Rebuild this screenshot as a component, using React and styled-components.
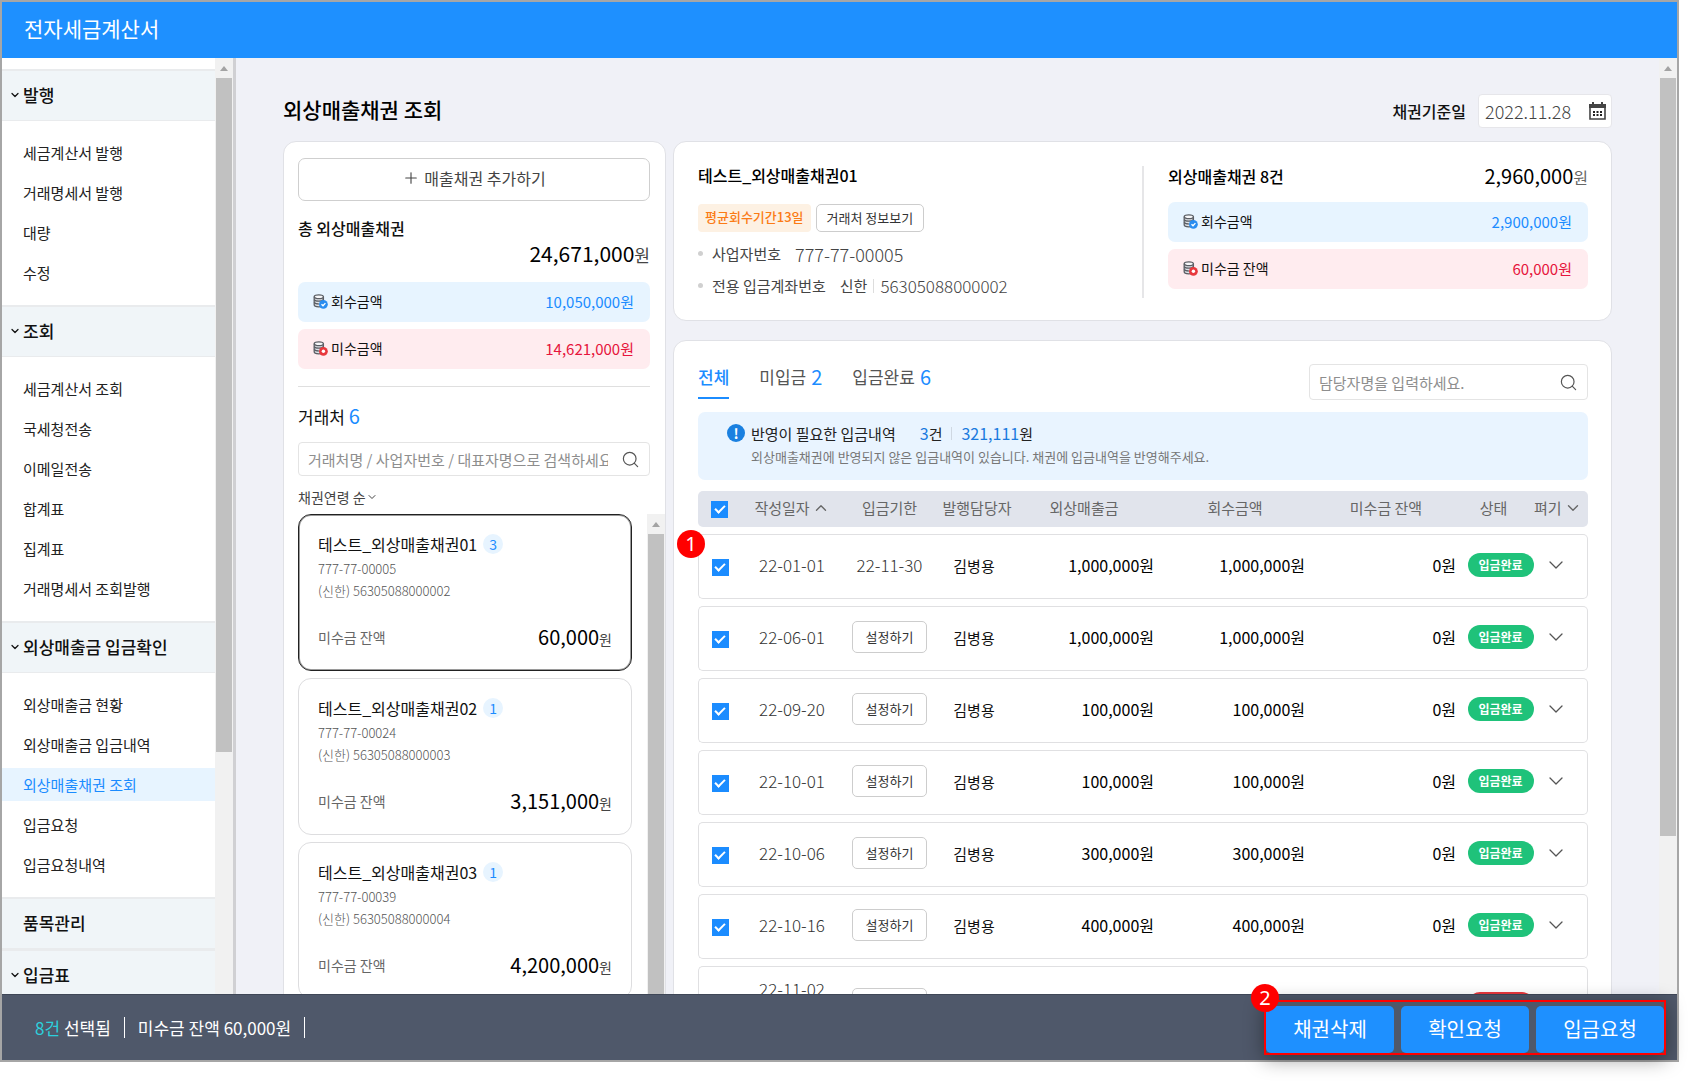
import React from "react";
import styled, { createGlobalStyle, css } from "styled-components";
import { ChevronDown, ChevronUp, Plus, Search } from "lucide-react";

const blue = "#1b8cff";
const red = "#e6153c";

const GlobalStyle = createGlobalStyle`
  *, *::before, *::after { box-sizing: border-box; }
  body {
    margin: 0;
    background: #fff;
    color: #111;
    font-family: "Noto Sans CJK KR", "Noto Sans", sans-serif;
    font-size: 15px;
  }
  button, input, select { font: inherit; color: inherit; margin: 0; }
  button { cursor: pointer; }
  h1, h2, h3, p, ul, dl, dd { margin: 0; padding: 0; font-size: inherit; }
  ul { list-style: none; }
  svg { display: block; flex: none; }
`;

/* ---------- Shell ---------- */

const Page = styled.div`
  height: 100vh;
  padding: 0 18px 23px 0;
`;

const Frame = styled.div`
  display: flex;
  flex-direction: column;
  height: 100%;
  border: 2px solid #a6a6a6;
`;

const TopBar = styled.header`
  display: flex;
  align-items: center;
  flex: none;
  height: 56px;
  padding: 0 22px 4px;
  background: #1e90ff;
  color: #fff;
  font-size: 21px;
`;

const Body = styled.div`
  display: flex;
  flex: 1;
  min-height: 0;
  overflow: hidden;
`;

/* ---------- Scroll bar ---------- */

const ScrollTrack = styled.div`
  display: flex;
  flex-direction: column;
  align-items: center;
  flex: none;
  width: 18px;
  background: #f1f1f1;
`;

const ScrollArrow = styled.div`
  display: grid;
  place-items: center;
  flex: none;
  height: 20px;

  &::before {
    content: "";
    border: 4px solid transparent;
    border-top: 0;
    border-bottom: 5px solid #a3a3a3;
  }
`;

const ScrollThumb = styled.div`
  width: 16px;
  height: ${(p) => p.$size};
  background: #c1c1c1;
`;

function ScrollBar({ size }) {
  return (
    <ScrollTrack aria-hidden="true">
      <ScrollArrow />
      <ScrollThumb $size={size} />
    </ScrollTrack>
  );
}

/* ---------- Side menu ---------- */

const Side = styled.aside`
  display: flex;
  flex: none;
  width: 234px;
  border-right: 3px solid #d0d0d3;
  background: #fff;
`;

const SideNav = styled.nav`
  flex: 1;
  padding-top: 11px;
`;

const GroupButton = styled.button`
  display: flex;
  align-items: center;
  width: 100%;
  height: 52px;
  padding: 0 7px 2px;
  border: solid #e9ebed;
  border-width: 2px 0 1px;
  background: #f0f5f8;
  font-size: 17px;
  font-weight: 500;
  color: #111;
`;

const ChevronSlot = styled.span`
  flex: none;
  width: 14px;
`;

const MenuList = styled.ul`
  display: grid;
  gap: 7px;
  padding: 15px 0 16px;
`;

const MenuLink = styled.a`
  display: flex;
  align-items: center;
  height: 33px;
  padding: 0 0 1px 21px;
  background: ${(p) => (p.$active ? "#e7f4ff" : "transparent")};
  color: ${(p) => (p.$active ? blue : "#222")};
  text-decoration: none;
`;

const MENU = [
  { title: "발행", items: ["세금계산서 발행", "거래명세서 발행", "대량", "수정"] },
  {
    title: "조회",
    items: ["세금계산서 조회", "국세청전송", "이메일전송", "합계표", "집계표", "거래명세서 조회발행"],
  },
  {
    title: "외상매출금 입금확인",
    items: ["외상매출금 현황", "외상매출금 입금내역", "외상매출채권 조회", "입금요청", "입금요청내역"],
  },
  { title: "품목관리" },
  { title: "입금표", items: [] },
];

const ACTIVE_ITEM = "외상매출채권 조회";

function SideMenu() {
  return (
    <Side>
      <SideNav>
        {MENU.map(({ title, items }) => (
          <React.Fragment key={title}>
            <GroupButton type="button">
              <ChevronSlot>{items && <ChevronDown size={12} strokeWidth={2.5} />}</ChevronSlot>
              {title}
            </GroupButton>
            {items && items.length > 0 && (
              <MenuList>
                {items.map((item) => (
                  <li key={item}>
                    <MenuLink href="#" $active={item === ACTIVE_ITEM}>
                      {item}
                    </MenuLink>
                  </li>
                ))}
              </MenuList>
            )}
          </React.Fragment>
        ))}
      </SideNav>
      <ScrollBar size="72%" />
    </Side>
  );
}

/* ---------- Shared parts ---------- */

const Panel = styled.section`
  border: 1px solid #e0e1e6;
  border-radius: 13px;
  background: #fff;
`;

const SearchBox = styled.label`
  display: flex;
  align-items: center;
  gap: 13px;
  width: ${(p) => p.$width || "auto"};
  height: ${(p) => p.$height || "34px"};
  padding: 0 9px;
  border: 1px solid #e4e4e4;
  border-radius: 4px;
  color: #555;
`;

const TextInput = styled.input`
  flex: 1;
  width: 0;
  min-width: 0;
  padding: 0;
  border: 0;
  outline: 0;
  background: transparent;

  &::placeholder {
    color: #8e8e8e;
    opacity: 1;
  }
`;

const Checkbox = styled.input.attrs({ type: "checkbox" })`
  display: inline-grid;
  place-items: center;
  width: 17px;
  height: 17px;
  border: 1px solid #bbb;
  appearance: none;
  vertical-align: middle;

  &:checked {
    border-color: ${blue};
    background: ${blue};
  }

  &:checked::before {
    content: "";
    width: 10px;
    height: 6px;
    margin-bottom: 3px;
    border: solid #fff;
    border-width: 0 0 2px 2px;
    transform: rotate(-45deg);
  }
`;

const AmountBox = styled.div`
  display: flex;
  align-items: center;
  height: 40px;
  padding: 0 16px 2px 15px;
  border-radius: 7px;
  background: ${(p) => (p.$tone === "blue" ? "#e7f4ff" : "#ffecef")};

  & + & {
    margin-top: 7px;
  }
`;

const AmountLabel = styled.span`
  flex: 1;
  padding-left: 3px;
  font-size: 14px;
`;

const AmountValue = styled.span`
  color: ${(p) => (p.$tone === "blue" ? blue : red)};
`;

function CoinIcon({ tone }) {
  const badge = tone === "blue" ? "#2a8df0" : "#e8383d";
  return (
    <svg width="15" height="15" viewBox="0 0 15 15" fill="none" aria-hidden="true">
      <path
        d="M1.2 2.8v8c0 1.1 2 2 4.6 2s4.6-.9 4.6-2v-8"
        fill="#dfe3e8"
        stroke="#5a5d63"
        strokeWidth="1.3"
      />
      <ellipse cx="5.8" cy="2.8" rx="4.6" ry="1.9" fill="#f6f7f9" stroke="#5a5d63" strokeWidth="1.3" />
      <path d="M1.2 5.6c.6 1 2.3 1.6 4.6 1.6s4-.6 4.6-1.6M1.2 8.4c.6 1 2.3 1.6 4.6 1.6" stroke="#5a5d63" strokeWidth="1.3" />
      <circle cx="10.4" cy="10.3" r="4.4" fill={badge} />
      {tone === "blue" ? (
        <path d="m8.5 10.3 1.5 1.5 2.4-2.7" stroke="#fff" strokeWidth="1.3" />
      ) : (
        <circle cx="10.4" cy="10.3" r="1.7" fill="#fff" />
      )}
    </svg>
  );
}

function AmountRow({ tone, label, value }) {
  return (
    <AmountBox $tone={tone}>
      <CoinIcon tone={tone} />
      <AmountLabel>{label}</AmountLabel>
      <AmountValue $tone={tone}>{value}원</AmountValue>
    </AmountBox>
  );
}

const BigAmount = styled.span`
  font-size: ${(p) => p.$size || 20}px;
  line-height: 22px;
  color: #000;
`;

const Unit = styled.span`
  font-size: ${(p) => p.$size || 14}px;
  color: ${(p) => p.$color || "#444"};
`;

const Count = styled.span`
  font-size: 20px;
  color: ${blue};
`;

/* ---------- Main ---------- */

const Main = styled.main`
  flex: 1;
  min-width: 0;
  padding: 36px 47px 0;
  background: #f0f1f7;
`;

const TitleRow = styled.div`
  display: flex;
  align-items: center;
  justify-content: space-between;
  height: 34px;
  margin-bottom: 13px;
`;

const PageTitle = styled.h1`
  padding-bottom: 4px;
  font-size: 21px;
  font-weight: 500;
  color: #000;
`;

const DateField = styled.label`
  display: flex;
  align-items: center;
  gap: 12px;
  font-size: 16px;
  font-weight: 500;
`;

const DateBox = styled.span`
  display: flex;
  align-items: center;
  width: 134px;
  height: 34px;
  padding: 0 5px 0 6px;
  border: 1px solid #e6e6ea;
  border-radius: 4px;
  background: #fff;
  font-size: 18px;
  font-weight: 300;
  color: #444;
`;

const Columns = styled.div`
  display: flex;
  gap: 7px;
`;

/* ---------- Customer panel ---------- */

const CustomerPanel = styled(Panel)`
  flex: none;
  width: 383px;
  padding: 16px 15px 20px 14px;
`;

const AddButton = styled.button`
  display: flex;
  align-items: center;
  justify-content: center;
  gap: 4px;
  width: 100%;
  height: 43px;
  padding: 0 0 3px;
  border: 1px solid #cfcfcf;
  border-radius: 7px;
  background: #fff;
  color: #444;
  font-size: 16px;
`;

const TotalTitle = styled.h2`
  margin-top: 15px;
  font-size: 16px;
  font-weight: 500;
  line-height: 24px;
`;

const TotalAmount = styled.p`
  display: flex;
  align-items: baseline;
  justify-content: flex-end;
  height: 28px;
  margin: 2px 0 12px;
  line-height: 22px;
`;

const Divider = styled.hr`
  height: 1px;
  margin: 17px 0 16px;
  border: 0;
  background: #dfdfdf;
`;

const CustomerTitle = styled.h2`
  height: 26px;
  margin-bottom: 13px;
  font-size: 17px;
  font-weight: 400;
  line-height: 26px;
`;

const SortBox = styled.label`
  display: flex;
  align-items: center;
  width: fit-content;
  height: 20px;
  margin: 11px 0 7px;
  font-size: 14px;
  color: #444;
`;

const SortSelect = styled.select`
  padding: 0;
  border: 0;
  outline: 0;
  appearance: none;
  background: transparent;
`;

const ListArea = styled.div`
  display: flex;
  gap: 15px;
  margin-right: -15px;
`;

const CardList = styled.ul`
  display: grid;
  flex: 1;
  gap: 7px;
`;

const CustomerCard = styled.li`
  padding: 17px 19px 19px;
  border: 1px solid ${(p) => (p.$selected ? "#222" : "#dddddf")};
  border-radius: 13px;
  box-shadow: ${(p) => (p.$selected ? "inset 0 0 0 1px #9a9a9a" : "none")};
`;

const CardTitle = styled.h3`
  display: flex;
  align-items: center;
  gap: 6px;
  margin-bottom: 2px;
  font-size: 16px;
  font-weight: 400;
  line-height: 24px;
`;

const CardCount = styled.span`
  display: grid;
  place-items: center;
  width: 20px;
  height: 20px;
  border-radius: 50%;
  background: #e7f4ff;
  color: ${blue};
  font-size: 14px;
  line-height: 20px;
`;

const CardLine = styled.p`
  font-size: 13px;
  font-weight: 300;
  line-height: 22px;
  color: #555;
`;

const CardBalance = styled.p`
  display: flex;
  align-items: center;
  justify-content: space-between;
  height: 28px;
  margin-top: 21px;
  font-size: 14px;
  color: #666;
`;

const CUSTOMERS = [
  { name: "테스트_외상매출채권01", count: 3, biz: "777-77-00005", account: "56305088000002", balance: "60,000" },
  { name: "테스트_외상매출채권02", count: 1, biz: "777-77-00024", account: "56305088000003", balance: "3,151,000" },
  { name: "테스트_외상매출채권03", count: 1, biz: "777-77-00039", account: "56305088000004", balance: "4,200,000" },
];

function Customers() {
  return (
    <CustomerPanel>
      <AddButton type="button">
        <Plus size={18} strokeWidth={1.5} />
        매출채권 추가하기
      </AddButton>
      <TotalTitle>총 외상매출채권</TotalTitle>
      <TotalAmount>
        <BigAmount $size={21}>24,671,000</BigAmount>
        <Unit $size={17}>원</Unit>
      </TotalAmount>
      <AmountRow tone="blue" label="회수금액" value="10,050,000" />
      <AmountRow tone="red" label="미수금액" value="14,621,000" />
      <Divider />
      <CustomerTitle>
        거래처 <Count>6</Count>
      </CustomerTitle>
      <SearchBox>
        <TextInput
          aria-label="거래처 검색"
          placeholder="거래처명 / 사업자번호 / 대표자명으로 검색하세요."
        />
        <Search size={19} strokeWidth={1.5} />
      </SearchBox>
      <SortBox>
        <SortSelect aria-label="정렬">
          <option>채권연령 순</option>
        </SortSelect>
        <ChevronDown size={12} strokeWidth={2} />
      </SortBox>
      <ListArea>
        <CardList>
          {CUSTOMERS.map((c, i) => (
            <CustomerCard key={c.name} $selected={i === 0}>
              <CardTitle>
                {c.name}
                <CardCount>{c.count}</CardCount>
              </CardTitle>
              <CardLine>{c.biz}</CardLine>
              <CardLine>(신한) {c.account}</CardLine>
              <CardBalance>
                미수금 잔액
                <span>
                  <BigAmount>{c.balance}</BigAmount>
                  <Unit>원</Unit>
                </span>
              </CardBalance>
            </CustomerCard>
          ))}
        </CardList>
        <ScrollBar size="100%" />
      </ListArea>
    </CustomerPanel>
  );
}

/* ---------- Summary panel ---------- */

const RightColumn = styled.div`
  display: flex;
  flex: 1;
  flex-direction: column;
  gap: 19px;
  min-width: 0;
`;

const SummaryPanel = styled(Panel)`
  display: flex;
  gap: 24px;
  padding: 24px 23px 22px 24px;
`;

const SummaryInfo = styled.div`
  flex: 1;
  border-right: 2px solid #e6e6e8;
`;

const SummaryTotals = styled.div`
  flex: none;
  width: 420px;
`;

const SummaryTitle = styled.h2`
  height: 20px;
  font-size: 16px;
  font-weight: 500;
  line-height: 18px;
  color: #000;
`;

const TagRow = styled.div`
  display: flex;
  gap: 5px;
  margin: 18px 0 12px;
`;

const PeriodTag = styled.span`
  display: flex;
  align-items: center;
  height: 28px;
  padding: 0 7px 3px;
  border-radius: 4px;
  background: #fdf1e3;
  color: #fb7b15;
  font-size: 13px;
  font-weight: 500;
`;

const SmallButton = styled.button`
  height: ${(p) => p.$height || 28}px;
  padding: 0 ${(p) => p.$pad || 10}px;
  border: 1px solid #cdcdcd;
  border-radius: 5px;
  background: #fff;
  color: #333;
  font-size: 13px;
  line-height: 20px;
  white-space: nowrap;
`;

const InfoList = styled.dl`
  display: grid;
  gap: 10px;
`;

const InfoItem = styled.div`
  display: flex;
  align-items: center;
  gap: 14px;
  height: 22px;
  padding-bottom: 3px;
  color: #444;
`;

const InfoLabel = styled.dt`
  display: flex;
  align-items: center;
  gap: 9px;

  &::before {
    content: "";
    width: 5px;
    height: 5px;
    border-radius: 50%;
    background: #d0d0d0;
  }
`;

const InfoValue = styled.dd`
  display: flex;
  align-items: center;
  gap: 6px;
`;

const InfoNumber = styled.span`
  font-size: ${(p) => p.$size || 17}px;
  font-weight: 300;
`;

const Bar = styled.span`
  width: 1px;
  height: ${(p) => p.$height}px;
  background: ${(p) => p.$color};
`;

const TotalsHead = styled.div`
  display: flex;
  align-items: center;
  justify-content: space-between;
  height: 22px;
  margin-bottom: 14px;
`;

function Summary() {
  return (
    <SummaryPanel>
      <SummaryInfo>
        <SummaryTitle>테스트_외상매출채권01</SummaryTitle>
        <TagRow>
          <PeriodTag>평균회수기간13일</PeriodTag>
          <SmallButton type="button">거래처 정보보기</SmallButton>
        </TagRow>
        <InfoList>
          <InfoItem>
            <InfoLabel>사업자번호</InfoLabel>
            <InfoValue>
              <InfoNumber $size={18}>777-77-00005</InfoNumber>
            </InfoValue>
          </InfoItem>
          <InfoItem>
            <InfoLabel>전용 입금계좌번호</InfoLabel>
            <InfoValue>
              신한
              <Bar $height={14} $color="#ddd" />
              <InfoNumber>56305088000002</InfoNumber>
            </InfoValue>
          </InfoItem>
        </InfoList>
      </SummaryInfo>
      <SummaryTotals>
        <TotalsHead>
          <SummaryTitle>외상매출채권 8건</SummaryTitle>
          <span>
            <BigAmount>2,960,000</BigAmount>
            <Unit $size={16} $color="#666">
              원
            </Unit>
          </span>
        </TotalsHead>
        <AmountRow tone="blue" label="회수금액" value="2,900,000" />
        <AmountRow tone="red" label="미수금 잔액" value="60,000" />
      </SummaryTotals>
    </SummaryPanel>
  );
}

/* ---------- Receivables panel ---------- */

const ListPanel = styled(Panel)`
  position: relative;
  padding: 23px 23px 20px 24px;
`;

const TabRow = styled.div`
  display: flex;
  align-items: flex-start;
  justify-content: space-between;
`;

const Tabs = styled.div`
  display: flex;
  gap: 30px;
`;

const Tab = styled.button`
  display: flex;
  align-items: center;
  gap: 5px;
  height: 35px;
  padding: 0 0 7px;
  border: solid transparent;
  border-width: 0 0 2px;
  background: none;
  color: #555;
  font-size: 17px;
  line-height: 26px;

  ${(p) =>
    p.$active &&
    css`
      border-color: ${blue};
      color: ${blue};
      font-weight: 500;
    `}
`;

const Notice = styled.div`
  display: flex;
  gap: 6px;
  height: 68px;
  margin: 12px 0 4px;
  padding: 10px 29px;
  border-radius: 7px;
  background: #e9f4ff;
`;

const NoticeMark = styled.span`
  display: grid;
  place-items: center;
  flex: none;
  width: 18px;
  height: 18px;
  margin-top: 2px;
  border-radius: 50%;
  background: #1a80e0;
  color: #fff;
  font-size: 14px;
  font-weight: 700;
  line-height: 18px;
`;

const NoticeHead = styled.p`
  display: flex;
  align-items: center;
  height: 22px;
  margin-bottom: 3px;
  color: #222;
`;

const NoticeFigures = styled.span`
  display: flex;
  align-items: center;
  gap: 9px;
  margin-left: 24px;
`;

const NoticeNumber = styled.span`
  color: #1a7ade;
  font-size: 16px;
`;

const NoticeText = styled.p`
  font-size: 13px;
  line-height: 20px;
  color: #777;
`;

const Table = styled.table`
  width: 100%;
  table-layout: fixed;
  border-collapse: separate;
  border-spacing: 0 7px;
`;

const Th = styled.th`
  height: 36px;
  padding: 0 ${(p) => p.$right || 0}px 3px 0;
  background: #e1e4ec;
  color: #666;
  font-weight: 400;
  line-height: 20px;
  text-align: center;
  white-space: nowrap;

  &:first-child { border-radius: 5px 0 0 5px; }
  &:last-child { border-radius: 0 5px 5px 0; }
`;

const HeadButton = styled.button`
  display: inline-flex;
  align-items: center;
  gap: 2px;
  padding: 0;
  border: 0;
  background: none;
  line-height: 20px;
`;

const Td = styled.td`
  height: ${(p) => (p.$tall ? 79 : 65)}px;
  padding: 0 ${(p) => p.$right || 0}px 3px 0;
  border: solid #e0e0e2;
  border-width: 1px 0;
  text-align: ${(p) => p.$align || "center"};
  vertical-align: ${(p) => p.$valign || "middle"};
  white-space: nowrap;

  &:first-child { border-left-width: 1px; border-radius: 5px 0 0 5px; }
  &:last-child { border-right-width: 1px; border-radius: 0 5px 5px 0; }
`;

const DateText = styled.span`
  font-size: 17px;
  font-weight: 300;
  color: #333;
  line-height: ${(p) => (p.$tall ? 44 : 24)}px;
`;

const Money = styled.span`
  font-size: 16px;
  color: #000;
`;

const Status = styled.span`
  display: inline-block;
  width: 66px;
  height: 24px;
  border-radius: 12px;
  background: ${(p) => (p.$tone === "red" ? "#e8383d" : "#1fc27a")};
  color: #fff;
  font-size: 12px;
  font-weight: 700;
  line-height: 24px;
  text-align: center;
  vertical-align: middle;
`;

const IconButton = styled.button`
  padding: 0;
  border: 0;
  background: none;
  color: #555;
  vertical-align: middle;
`;

const Marker = styled.span`
  position: absolute;
  top: ${(p) => p.$top}px;
  left: ${(p) => p.$left}px;
  display: grid;
  place-items: center;
  width: 28px;
  height: 28px;
  border-radius: 50%;
  background: #f00;
  color: #fff;
  font-family: "Noto Sans", sans-serif;
  font-size: 20px;
  line-height: 28px;
`;

const COLUMN_WIDTHS = [47, 94, 101, 74, 151, 151, 151, 67, 54];

const ROWS = [
  { date: "22-01-01", due: "22-11-30", owner: "김병용", total: "1,000,000", paid: "1,000,000", status: "입금완료" },
  { date: "22-06-01", owner: "김병용", total: "1,000,000", paid: "1,000,000", status: "입금완료" },
  { date: "22-09-20", owner: "김병용", total: "100,000", paid: "100,000", status: "입금완료" },
  { date: "22-10-01", owner: "김병용", total: "100,000", paid: "100,000", status: "입금완료" },
  { date: "22-10-06", owner: "김병용", total: "300,000", paid: "300,000", status: "입금완료" },
  { date: "22-10-16", owner: "김병용", total: "400,000", paid: "400,000", status: "입금완료" },
  { date: "22-11-02", tall: true },
];

function ReceivableRow({ row }) {
  const { tall } = row;
  const money = (value) => (value ? <Money>{value}원</Money> : null);
  return (
    <tr>
      <Td $tall={tall} $right={4}>
        <Checkbox defaultChecked aria-label={`${row.date} 선택`} />
      </Td>
      <Td $tall={tall} $valign={tall ? "top" : "middle"}>
        <DateText $tall={tall}>{row.date}</DateText>
      </Td>
      <Td $tall={tall}>
        {row.due ? (
          <DateText>{row.due}</DateText>
        ) : (
          <SmallButton type="button" $height={32} $pad={13}>
            설정하기
          </SmallButton>
        )}
      </Td>
      <Td $tall={tall} $right={6}>{row.owner}</Td>
      <Td $tall={tall} $align="right" $right={11}>{money(row.total)}</Td>
      <Td $tall={tall} $align="right" $right={11}>{money(row.paid)}</Td>
      <Td $tall={tall} $align="right" $right={11}>{money(row.status && "0")}</Td>
      <Td $tall={tall}>
        <Status $tone={row.status ? "green" : "red"}>{row.status}</Status>
      </Td>
      <Td $tall={tall} $right={10}>
        <IconButton type="button" aria-label="펴기">
          <ChevronDown size={24} strokeWidth={1.3} />
        </IconButton>
      </Td>
    </tr>
  );
}

function Receivables() {
  return (
    <ListPanel>
      <Marker $top={189} $left={3}>1</Marker>
      <TabRow>
        <Tabs role="tablist">
          <Tab type="button" role="tab" aria-selected="true" $active>
            전체
          </Tab>
          <Tab type="button" role="tab" aria-selected="false">
            미입금 <Count>2</Count>
          </Tab>
          <Tab type="button" role="tab" aria-selected="false">
            입금완료 <Count>6</Count>
          </Tab>
        </Tabs>
        <SearchBox $width="279px" $height="36px">
          <TextInput aria-label="담당자명 검색" placeholder="담당자명을 입력하세요." />
          <Search size={19} strokeWidth={1.5} />
        </SearchBox>
      </TabRow>
      <Notice>
        <NoticeMark>!</NoticeMark>
        <div>
          <NoticeHead>
            반영이 필요한 입금내역
            <NoticeFigures>
              <span>
                <NoticeNumber>3</NoticeNumber>건
              </span>
              <Bar $height={13} $color="#cfd8e2" />
              <span>
                <NoticeNumber>321,111</NoticeNumber>원
              </span>
            </NoticeFigures>
          </NoticeHead>
          <NoticeText>
            외상매출채권에 반영되지 않은 입금내역이 있습니다. 채권에 입금내역을 반영해주세요.
          </NoticeText>
        </div>
      </Notice>
      <Table>
        <colgroup>
          {COLUMN_WIDTHS.map((width, i) => (
            <col key={i} width={width} />
          ))}
        </colgroup>
        <thead>
          <tr>
            <Th $right={4}>
              <Checkbox defaultChecked aria-label="전체 선택" />
            </Th>
            <Th>
              <HeadButton type="button">
                작성일자
                <ChevronUp size={18} strokeWidth={1.8} />
              </HeadButton>
            </Th>
            <Th>입금기한</Th>
            <Th>발행담당자</Th>
            <Th $right={11}>외상매출금</Th>
            <Th $right={11}>회수금액</Th>
            <Th $right={11}>미수금 잔액</Th>
            <Th $right={14}>상태</Th>
            <Th $right={8}>
              <HeadButton type="button">
                펴기
                <ChevronDown size={18} strokeWidth={1.8} />
              </HeadButton>
            </Th>
          </tr>
        </thead>
        <tbody>
          {ROWS.map((row) => (
            <ReceivableRow key={row.date} row={row} />
          ))}
        </tbody>
      </Table>
    </ListPanel>
  );
}

/* ---------- Action bar ---------- */

const ActionBar = styled.footer`
  position: relative;
  display: flex;
  align-items: center;
  flex: none;
  gap: 13px;
  height: 66px;
  padding: 0 11px 0 33px;
  border-top: 1px solid #3f4757;
  background: #4f586a;
  color: #fff;
  font-size: 17px;
`;

const Accent = styled.span`
  color: #2cd0dc;
`;

const ActionGroup = styled.div`
  position: relative;
  display: flex;
  gap: 7px;
  margin-left: auto;
  padding: 4px 0 0;
  border: 2px solid #f00;
  box-shadow: 0 4px 20px rgba(0, 0, 0, 0.4);
`;

const ActionButton = styled.button`
  width: 128px;
  height: 47px;
  padding: 0 0 2px;
  border: 0;
  border-radius: 5px;
  background: #1e90ff;
  color: #fff;
  font-size: 20px;
`;

function CalendarIcon() {
  return (
    <svg width="17" height="18" viewBox="0 0 17 18" fill="none" aria-hidden="true">
      <path d="M1 3h15v14H1z" stroke="#444" strokeWidth="1.6" />
      <path d="M0 2h17v4H0zM3 0h2v3H3zM12 0h2v3h-2z" fill="#444" />
      <path
        d="M4 9h2v2H4zM7.5 9h2v2h-2zM11 9h2v2h-2zM4 12h2v2H4zM7.5 12h2v2h-2zM11 12h2v2h-2z"
        fill="#222"
      />
    </svg>
  );
}

export default function App() {
  return (
    <Page>
      <GlobalStyle />
      <Frame>
        <TopBar>전자세금계산서</TopBar>
        <Body>
          <SideMenu />
          <Main>
            <TitleRow>
              <PageTitle>외상매출채권 조회</PageTitle>
              <DateField>
                채권기준일
                <DateBox>
                  <TextInput defaultValue="2022.11.28" />
                  <CalendarIcon />
                </DateBox>
              </DateField>
            </TitleRow>
            <Columns>
              <Customers />
              <RightColumn>
                <Summary />
                <Receivables />
              </RightColumn>
            </Columns>
          </Main>
          <ScrollBar size="81%" />
        </Body>
        <ActionBar>
          <span>
            <Accent>8건</Accent> 선택됨
          </span>
          <Bar $height={21} $color="#fff" />
          <span>미수금 잔액 60,000원</span>
          <Bar $height={21} $color="#fff" />
          <ActionGroup>
            <Marker $top={-18} $left={-15}>2</Marker>
            <ActionButton type="button">채권삭제</ActionButton>
            <ActionButton type="button">확인요청</ActionButton>
            <ActionButton type="button">입금요청</ActionButton>
          </ActionGroup>
        </ActionBar>
      </Frame>
    </Page>
  );
}
